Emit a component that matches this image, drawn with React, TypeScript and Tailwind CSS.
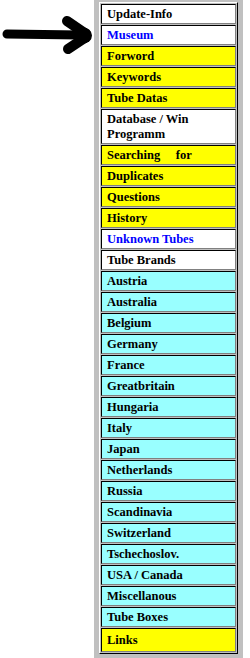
type Item = { label: string; tone: 'white' | 'link' | 'yellow' | 'cyan'; tall?: boolean }

const items: Item[] = [
  { label: 'Update-Info', tone: 'white' },
  { label: 'Museum', tone: 'link' },
  { label: 'Forword', tone: 'yellow' },
  { label: 'Keywords', tone: 'yellow' },
  { label: 'Tube Datas', tone: 'yellow' },
  { label: 'Database / Win\nProgramm', tone: 'white' },
  { label: 'Searching     for', tone: 'yellow' },
  { label: 'Duplicates', tone: 'yellow' },
  { label: 'Questions', tone: 'yellow' },
  { label: 'History', tone: 'yellow' },
  { label: 'Unknown Tubes', tone: 'link' },
  { label: 'Tube Brands', tone: 'white' },
  { label: 'Austria', tone: 'cyan' },
  { label: 'Australia', tone: 'cyan' },
  { label: 'Belgium', tone: 'cyan' },
  { label: 'Germany', tone: 'cyan' },
  { label: 'France', tone: 'cyan' },
  { label: 'Greatbritain', tone: 'cyan' },
  { label: 'Hungaria', tone: 'cyan' },
  { label: 'Italy', tone: 'cyan' },
  { label: 'Japan', tone: 'cyan' },
  { label: 'Netherlands', tone: 'cyan' },
  { label: 'Russia', tone: 'cyan' },
  { label: 'Scandinavia', tone: 'cyan' },
  { label: 'Switzerland', tone: 'cyan' },
  { label: 'Tschechoslov.', tone: 'cyan' },
  { label: 'USA / Canada', tone: 'cyan' },
  { label: 'Miscellanous', tone: 'cyan' },
  { label: 'Tube Boxes', tone: 'cyan' },
  { label: 'Links', tone: 'yellow', tall: true },
]

const toneClass = {
  white: 'bg-white text-black',
  link: 'bg-white text-[#0000ff]',
  yellow: 'bg-[#ffff00] text-black',
  cyan: 'bg-[#99ffff] text-black',
}

// hand drawn pointer next to "Museum"
function Arrow() {
  return (
    <svg width="94" height="70" viewBox="0 0 94 70">
      <line x1="7" y1="34" x2="80" y2="35" stroke="#000" strokeWidth="9" strokeLinecap="round" />
      <line x1="67" y1="21" x2="86" y2="34" stroke="#000" strokeWidth="10" strokeLinecap="round" />
      <line x1="68" y1="49" x2="86" y2="37" stroke="#000" strokeWidth="10" strokeLinecap="round" />
      <ellipse cx="83" cy="35.5" rx="9" ry="8" fill="#000" />
    </svg>
  )
}

export default function App() {
  return (
    <div className="flex h-[658px] w-[250px] overflow-hidden bg-white font-['Liberation_Serif',serif]">
      <div className="w-[94px] shrink-0">
        <Arrow />
      </div>

      <div className="w-[149px] shrink-0 bg-[#c0c0c0] pl-[5px] pt-[2px]">
        <div className="flex w-[139px] flex-col gap-[1px] border border-t-white border-l-white border-b-black border-r-black p-[1px]">
          {items.map((item) => (
            <div
              key={item.label}
              className={`whitespace-pre border border-t-black border-l-black border-b-[#808080] border-r-[#808080] pl-[5px] text-[12.5px] font-bold leading-[15px] ${
                item.tall ? 'pt-[4px] pb-[3px]' : 'pt-[2px] pb-[1px]'
              } ${toneClass[item.tone]}`}
            >
              {item.label}
            </div>
          ))}
        </div>
      </div>
    </div>
  )
}
